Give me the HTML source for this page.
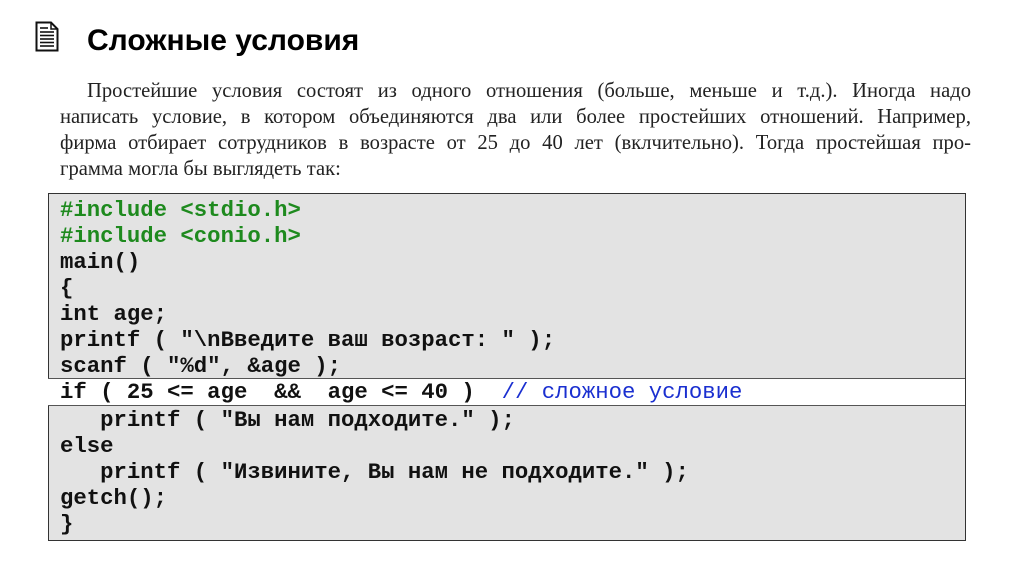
<!DOCTYPE html>
<html><head><meta charset="utf-8"><style>
body{margin:0;width:1024px;height:574px;background:#fff;position:relative;overflow:hidden}
.t{position:absolute;left:87px;top:24px;font:bold 30px "Liberation Sans",sans-serif;color:#000}
.p{position:absolute;left:60px;width:911px;font:20.6px "Liberation Serif",serif;color:#222;white-space:nowrap}
.j{text-align:justify;text-align-last:justify}
.box{position:absolute;left:48px;top:193px;width:916px;height:346px;background:#e3e3e3;border:1.5px solid #333}
.hl{position:absolute;left:48px;top:378px;width:917px;height:26px;background:#fff;border-top:1px solid #555;border-bottom:1px solid #555}
.c{position:absolute;left:60px;font:bold 22.3px "Liberation Mono",monospace;color:#111;white-space:pre;line-height:26px}
.g{color:#1e8a1e}.b{color:#1a2fd0;font-weight:normal}
</style></head><body>
<svg style="position:absolute;left:35px;top:21px" width="24" height="31" viewBox="0 0 24 31">
<path d="M1.5 1.5H16L22.5 8V29.5H1.5Z" fill="#fff" stroke="#111" stroke-width="2"/>
<path d="M16 1.5V8H22.5" fill="none" stroke="#111" stroke-width="1.5"/>
<g stroke="#111" stroke-width="1.6"><line x1="5" y1="7" x2="13" y2="7"/><line x1="5" y1="11" x2="19" y2="11"/><line x1="5" y1="14.5" x2="19" y2="14.5"/><line x1="5" y1="18" x2="19" y2="18"/><line x1="5" y1="21.5" x2="19" y2="21.5"/><line x1="5" y1="25" x2="19" y2="25"/></g>
</svg>
<div class="t">Сложные условия</div>
<div class="p j" style="top:80px;left:87px;width:884px">Простейшие условия состоят из одного отношения (больше, меньше и т.д.). Иногда надо</div>
<div class="p j" style="top:106px">написать условие, в котором объединяются два или более простейших отношений. Например,</div>
<div class="p j" style="top:132px">фирма отбирает сотрудников в возрасте от 25 до 40 лет (вклчительно). Тогда простейшая про-</div>
<div class="p" style="top:158px">грамма могла бы выглядеть так:</div>
<div class="box"></div>
<div class="hl"></div>
<div class="c" style="top:197px"><span class="g">#include &lt;stdio.h&gt;</span>
<span class="g">#include &lt;conio.h&gt;</span>
main()
{
int age;
printf ( "\nВведите ваш возраст: " );
scanf ( "%d", &amp;age );</div>
<div class="c" style="top:379px">if ( 25 &lt;= age  &amp;&amp;  age &lt;= 40 )  <span class="b">// сложное условие</span></div>
<div class="c" style="top:407px">   printf ( "Вы нам подходите." );
else
   printf ( "Извините, Вы нам не подходите." );
getch();
}</div>
</body></html>
